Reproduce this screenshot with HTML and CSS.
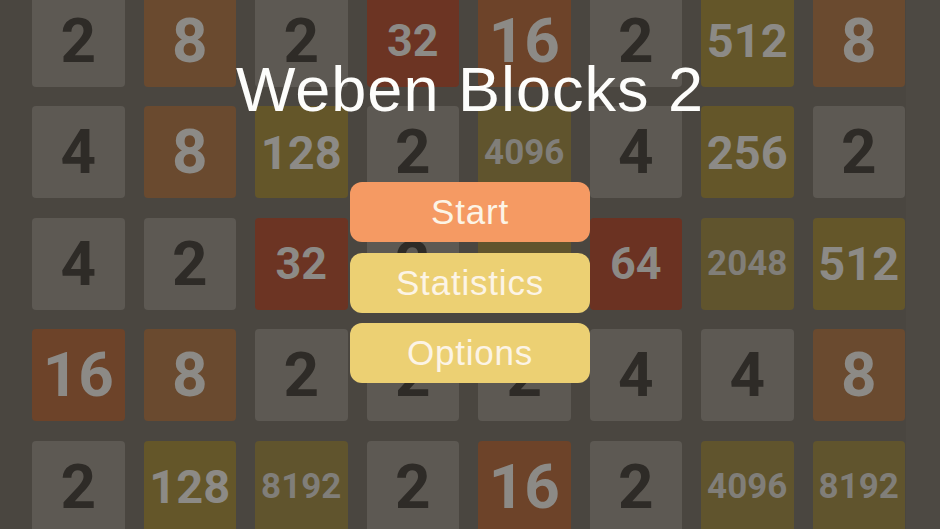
FILE: index.html
```html
<!DOCTYPE html>
<html lang="en">
<head>
<meta charset="utf-8">
<title>Weben Blocks 2</title>
<link rel="stylesheet" href="styles.css">
</head>
<body>
<div class="screen">
  <div class="board">
    <div class="tile t2">2</div><div class="tile t8">8</div><div class="tile t2">2</div><div class="tile t32">32</div><div class="tile t16">16</div><div class="tile t2">2</div><div class="tile t512">512</div><div class="tile t8">8</div>
    <div class="tile t4">4</div><div class="tile t8">8</div><div class="tile t128">128</div><div class="tile t2">2</div><div class="tile t4096">4096</div><div class="tile t4">4</div><div class="tile t256">256</div><div class="tile t2">2</div>
    <div class="tile t4">4</div><div class="tile t2">2</div><div class="tile t32">32</div><div class="tile t2">2</div><div class="tile t1024"></div><div class="tile t64">64</div><div class="tile t2048">2048</div><div class="tile t512">512</div>
    <div class="tile t16">16</div><div class="tile t8">8</div><div class="tile t2">2</div><div class="tile t2">2</div><div class="tile t2">2</div><div class="tile t4">4</div><div class="tile t4">4</div><div class="tile t8">8</div>
    <div class="tile t2">2</div><div class="tile t128">128</div><div class="tile t8192">8192</div><div class="tile t2">2</div><div class="tile t16">16</div><div class="tile t2">2</div><div class="tile t4096">4096</div><div class="tile t8192">8192</div>
  </div>
  <div class="menu">
    <h1 class="title">Weben Blocks 2</h1>
    <div class="buttons">
      <button class="btn btn-start">Start</button>
      <button class="btn btn-alt">Statistics</button>
      <button class="btn btn-alt">Options</button>
    </div>
  </div>
</div>
</body>
</html>
```
FILE: styles.css
```css
html, body {
  margin: 0;
  padding: 0;
  background: #4b4741;
}
.screen {
  position: relative;
  width: 940px;
  height: 529px;
  overflow: hidden;
  background: #4d4943;
}
.board {
  display: grid;
  grid-template-columns: repeat(8, 92.5px);
  grid-auto-rows: 92px;
  column-gap: 19px;
  row-gap: 19.5px;
  width: 874px;
  padding: 0 0 0 32px;
  margin-top: -5.5px;
  background: #4a4640;
  font-family: Roboto, "Liberation Sans", sans-serif;
  font-weight: 700;
}
.tile {
  display: flex;
  align-items: center;
  justify-content: center;
  border-radius: 4px;
  font-size: 62px;
  line-height: 1;
  color: #8c8a86;
}
.t2, .t4 { background: #5d5953; color: #2e2b27; }
.t8 { background: #6a4a2f; }
.t16 { background: #6d4329; }
.t32 { background: #6c3423; font-size: 45px; }
.t64 { background: #6b3222; font-size: 45px; }
.t128, .t256, .t512 { background: #645629; font-size: 47px; }
.t1024, .t2048, .t4096, .t8192 { background: #60542d; font-size: 35px; color: #807e79; }

.menu {
  position: absolute;
  top: 0;
  left: 0;
  right: 0;
  bottom: 0;
  display: flex;
  flex-direction: column;
  align-items: center;
  padding-top: 58px;
  font-family: "Liberation Sans", Arial, sans-serif;
}
.title {
  margin: 0 0 61px;
  font-size: 63px;
  line-height: 63px;
  font-weight: 400;
  letter-spacing: 1px;
  color: #fdfdfb;
}
.buttons {
  display: flex;
  flex-direction: column;
  gap: 10.5px;
}
.btn {
  width: 240px;
  height: 60px;
  border: none;
  border-radius: 12px;
  padding: 0;
  font-family: "Liberation Sans", Arial, sans-serif;
  font-size: 35px;
  line-height: 60px;
  letter-spacing: 0.8px;
  color: #fcf4e6;
}
.btn-start { background: #f59a63; }
.btn-alt { background: #ecd073; }
```
